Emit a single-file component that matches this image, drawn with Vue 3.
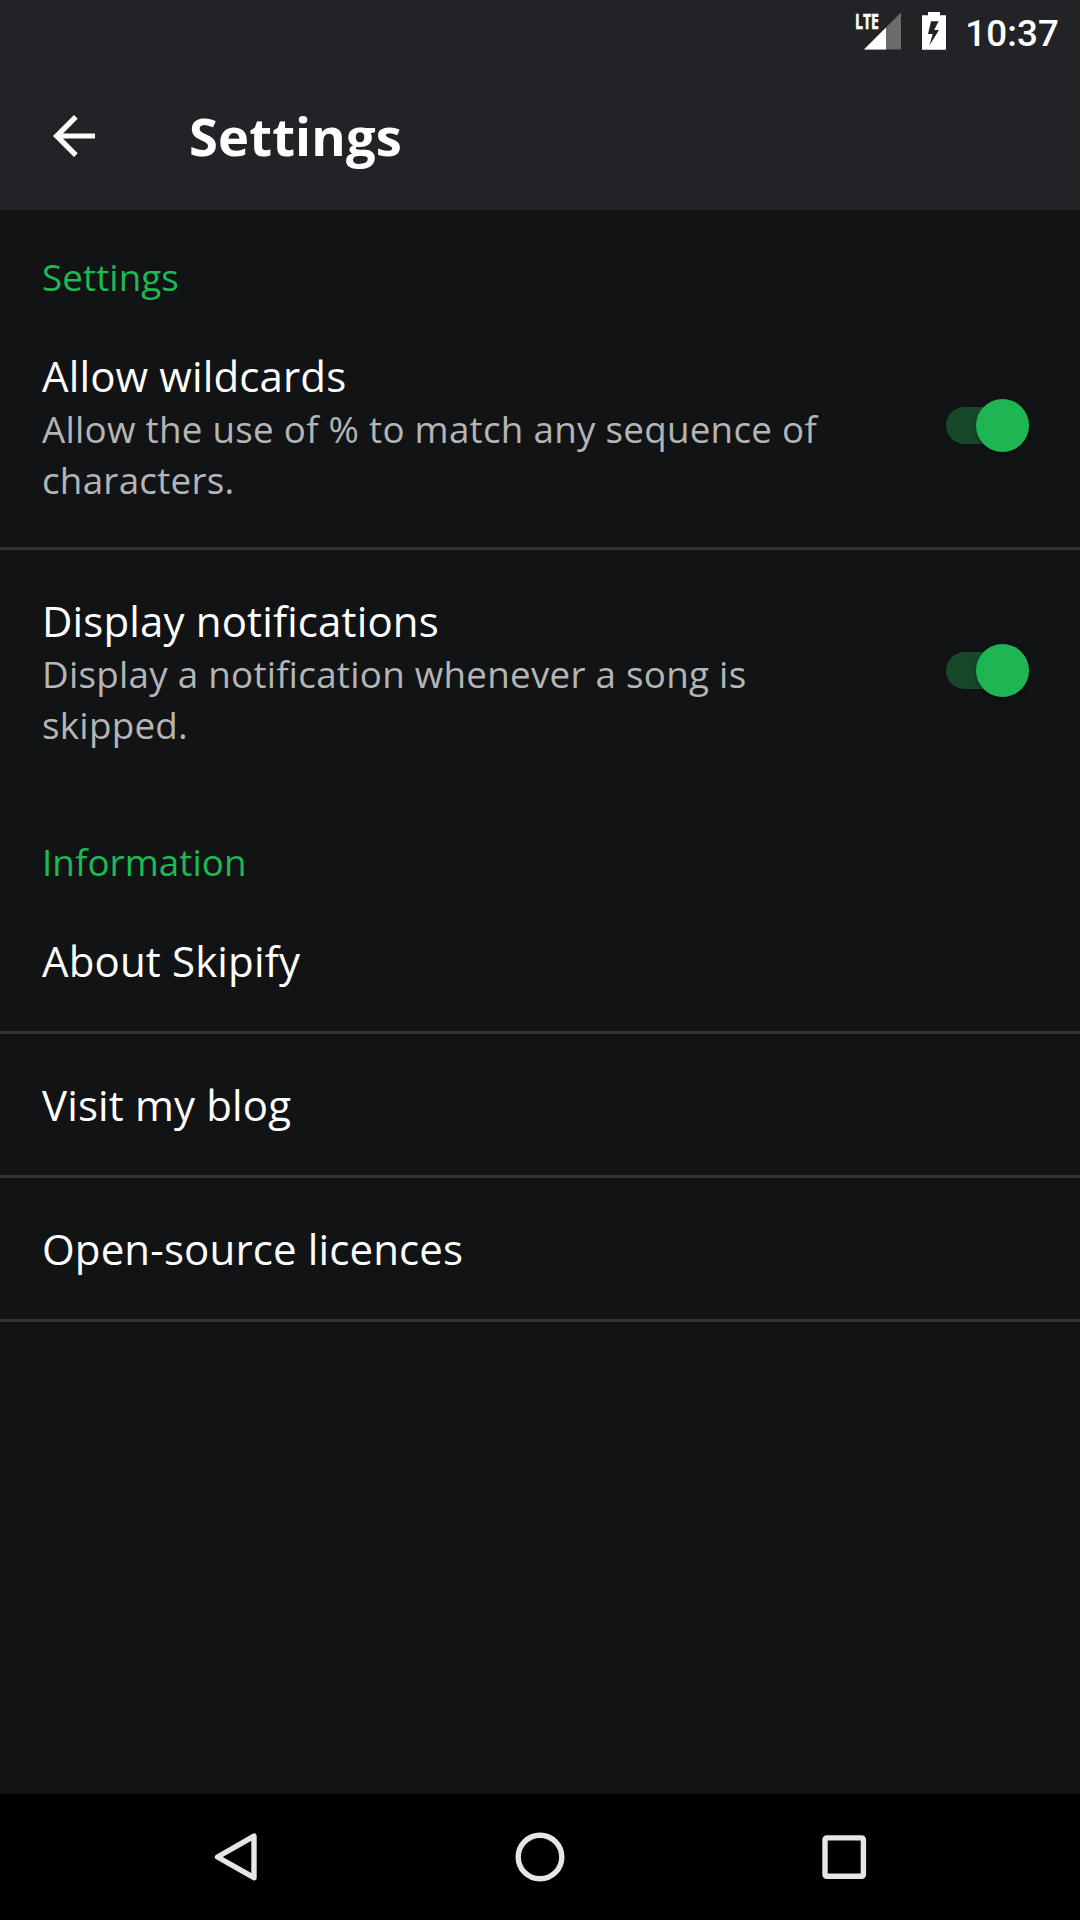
<script setup>
import { ref } from 'vue'

const toggles = ref([
  {
    title: 'Allow wildcards',
    summary: 'Allow the use of % to match any sequence of characters.',
    on: true,
  },
  {
    title: 'Display notifications',
    summary: 'Display a notification whenever a song is skipped.',
    on: true,
  },
])

const links = ['About Skipify', 'Visit my blog', 'Open-source licences']
</script>

<template>
  <div class="screen">
    <header class="header">
      <div class="status">
        <svg class="signal" width="48" height="50" viewBox="0 -10 48 50">
          <path d="M10 39.5H47V2.5z" fill="#6a6b6c" />
          <path d="M10 39.5H32V17.5z" fill="#fff" />
          <path d="M0 0H24.6V20.5H0z" fill="#222326" />
          <text x="1" y="19" textLength="24" lengthAdjust="spacingAndGlyphs">LTE</text>
        </svg>
        <svg class="battery" width="24" height="38" viewBox="0 0 24 38">
          <path
            fill="#fff"
            fill-rule="evenodd"
            d="M6 0h12v3.2h6v34.6H0V3.2h6zM9 9.2L6 22h4.7L7.4 33.6L17 18h-4.8L16.6 9.2z"
          />
        </svg>
        <span class="clock">10:37</span>
      </div>
      <div class="toolbar">
        <svg class="back" width="42" height="42" viewBox="0 0 42 42">
          <path d="M42 18.4H10L24.7 3.7L21 0L0 21L21 42L24.7 38.3L10 23.6H42z" fill="#fff" />
        </svg>
        <h1>Settings</h1>
      </div>
    </header>

    <main class="content">
      <section>
        <h2>Settings</h2>
        <div v-for="item in toggles" :key="item.title" class="row">
          <div class="text">
            <div class="title">{{ item.title }}</div>
            <div class="summary">{{ item.summary }}</div>
          </div>
          <button class="switch" :class="{ on: item.on }" @click="item.on = !item.on">
            <span class="thumb"></span>
          </button>
        </div>
      </section>
      <section>
        <h2>Information</h2>
        <div v-for="link in links" :key="link" class="row link">
          <div class="title">{{ link }}</div>
        </div>
      </section>
    </main>

    <nav class="navbar">
      <svg width="60" height="60" viewBox="0 0 60 60">
        <path d="M48 9.2V50.7L11.5 30z" />
      </svg>
      <svg width="60" height="60" viewBox="0 0 60 60">
        <circle cx="30" cy="30" r="21.8" />
      </svg>
      <svg width="60" height="60" viewBox="0 0 60 60">
        <rect x="11" y="10.9" width="38.4" height="38.4" rx="1.8" />
      </svg>
    </nav>
  </div>
</template>

<style>
body {
  background: #121315;
}
</style>

<style scoped>
.screen {
  display: flex;
  flex-direction: column;
  width: 1080px;
  height: 1920px;
  overflow: hidden;
  background: #121315;
  color: #fff;
  font-family: "Open Sans", "Noto Sans", sans-serif;
}

.header {
  flex: none;
  background: #222326;
}

.status {
  display: flex;
  align-items: flex-start;
  justify-content: flex-end;
  height: 63px;
  padding-right: 21px;
  box-sizing: border-box;
}

.signal {
  margin-right: 20px;
  overflow: visible;
}

.signal text {
  fill: #fff;
  stroke: #fff;
  stroke-width: 0.6px;
  font: 700 22px "Open Sans", sans-serif;
}

.battery {
  margin-top: 12px;
  margin-right: 19px;
}

.clock {
  font: 500 36.75px/43px Roboto, sans-serif;
  letter-spacing: 0.1px;
  margin-top: 12px;
}

.toolbar {
  display: flex;
  align-items: center;
  height: 147px;
  padding-left: 53px;
  padding-bottom: 1px;
  box-sizing: border-box;
}

h1 {
  margin: 0 0 1px 94px;
  font-size: 52.5px;
  line-height: 72px;
  font-weight: 700;
  letter-spacing: 0.15px;
}

.content {
  flex: 1;
}

h2 {
  margin: 0;
  padding: 42px 42px 2px;
  font-size: 36.75px;
  line-height: 51px;
  font-weight: 400;
  color: #1db954;
  letter-spacing: 0.08px;
}

.row {
  display: flex;
  align-items: center;
  justify-content: space-between;
  padding: 42px 51px 41px 42px;
  border-bottom: 3px solid #303134;
}

.row:last-child:not(.link) {
  border-bottom-color: transparent;
}

.link {
  padding-bottom: 42px;
}

.text {
  width: 800px;
}

.title {
  font-size: 42px;
  line-height: 57px;
  letter-spacing: 0.14px;
  font-feature-settings: "liga";
}

.summary {
  font-size: 36.75px;
  line-height: 51px;
  color: #b4b5b6;
  letter-spacing: 0.27px;
  font-feature-settings: "liga";
}

.switch {
  display: flex;
  align-items: center;
  width: 83px;
  height: 37px;
  margin-bottom: 2px;
  padding: 0;
  border: 0;
  border-radius: 19px;
  background: #3a3b3d;
}

.thumb {
  width: 53px;
  height: 53px;
  border-radius: 50%;
  background: #b9b9b9;
  box-shadow: 0 2px 4px rgba(0, 0, 0, 0.35);
}

.switch.on {
  justify-content: flex-end;
  background: #16482a;
}

.switch.on .thumb {
  background: #1eb653;
}

.navbar {
  flex: none;
  display: flex;
  justify-content: center;
  align-items: center;
  gap: 244px;
  height: 126px;
  background: #000;
}

.navbar svg {
  fill: none;
  stroke: #e6e6e6;
  stroke-width: 5.4;
  stroke-linejoin: round;
}
</style>
